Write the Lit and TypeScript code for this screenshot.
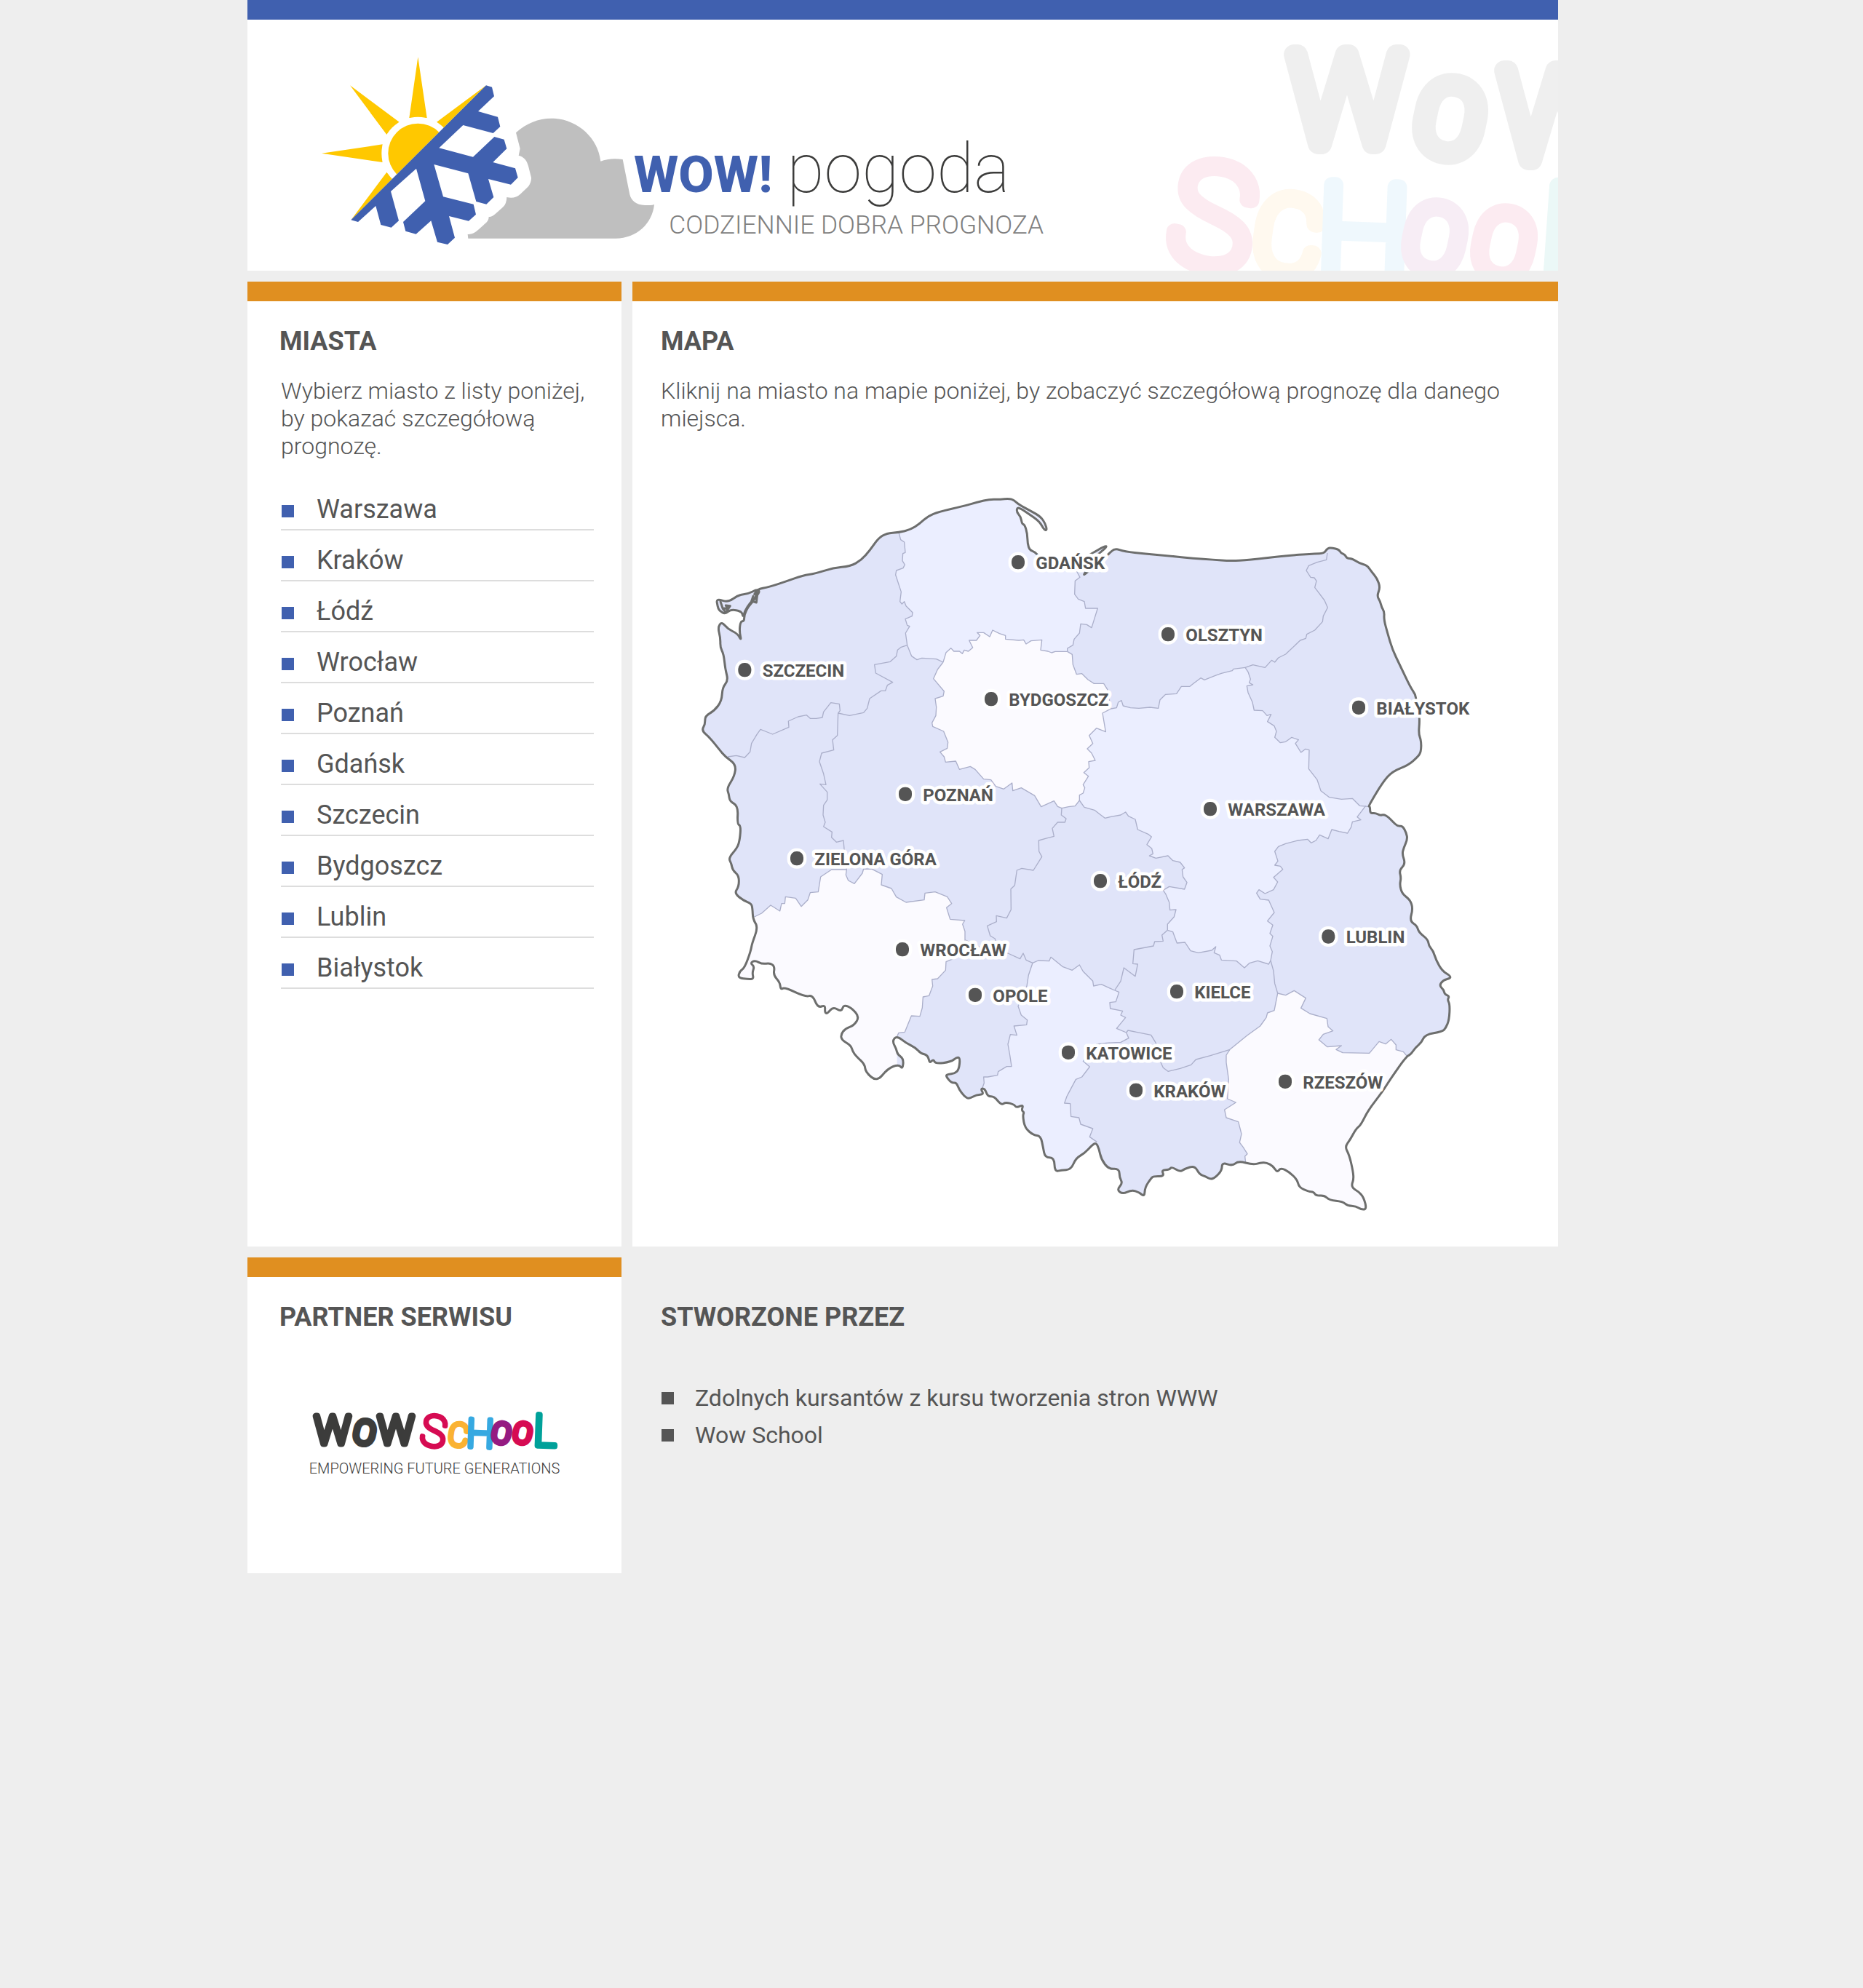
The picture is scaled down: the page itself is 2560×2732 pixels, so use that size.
import { LitElement, html, svg, css } from "lit";
import { customElement } from "lit/decorators.js";

const cities = [
  "Warszawa", "Kraków", "Łódź", "Wrocław", "Poznań",
  "Gdańsk", "Szczecin", "Bydgoszcz", "Lublin", "Białystok",
];

const credits = ["Zdolnych kursantów z kursu tworzenia stron WWW", "Wow School"];

/* ---------- Map geometry (grid of 3300 x 3060 units) ---------- */

type Pt = [number, number];
const pts = (s: string): Pt[] =>
  s.trim().split(/\s+/).map((p) => p.split(",").map(Number) as Pt);
const rev = (p: Pt[]): Pt[] => [...p].reverse();
const poly = (p: Pt[]): string => "M" + p.map((q) => q.join(",")).join("L");

/* Closed curve through the midpoints of the given points. */
const smooth = (p: Pt[]): string => {
  const mid = (a: Pt, b: Pt): Pt => [(a[0] + b[0]) / 2, (a[1] + b[1]) / 2];
  const start = mid(p[p.length - 1], p[0]);
  return (
    "M" + start.join(",") +
    p.map((q, i) => "Q" + q.join(",") + " " + mid(q, p[(i + 1) % p.length]).join(",")).join("") + "Z"
  );
};

const outline = pts(`
300,450 350,440 420,417 490,392 540,385 615,361 685,355 730,330 765,290 800,240 835,218 885,215
935,203 970,180 1005,148 1050,130 1150,107 1210,90 1260,78 1300,79 1340,75 1360,82 1380,100
1430,127 1470,150 1490,180 1496,207 1484,204 1465,170 1420,138 1375,108 1370,130 1388,150
1393,180 1404,183 1415,220 1416,262 1425,288 1445,295 1470,320 1600,345 1680,303 1735,270 1744,274
1700,310 1645,392 1655,385 1750,305 1775,280 1815,294 1900,303 2000,312 2100,322
2180,327 2250,333 2330,329 2470,312 2600,302 2638,302 2652,280 2670,278 2700,286 2708,300
2725,307 2732,322 2755,323 2785,343 2815,350 2835,378 2857,405 2870,442 2856,477 2870,500
2876,525 2887,542 2885,575 2900,630 2920,698 2950,760 2995,855 3015,883 3018,910 3030,970
3032,995 3028,1045 3039,1075 3038,1120 3025,1140 2985,1175 2920,1200 2880,1245 2820,1345 2828,1345
2828,1374 2850,1371 2868,1382 2885,1378 2903,1388 2922,1408 2942,1427 2962,1425 2978,1455
2982,1480 2967,1515 2960,1541 2974,1581 2948,1608 2956,1639 2950,1668 2960,1705 2992,1728
3005,1765 2991,1817 3022,1837 3028,1863 3067,1894 3070,1920 3088,1940 3100,1978 3125,2023
3160,2044 3157,2054 3130,2060 3113,2083 3132,2101 3135,2119 3155,2127 3147,2142 3157,2161
3154,2224 3140,2259 3125,2273 3055,2285 3040,2318 3015,2339 2995,2368 2977,2376 2910,2471
2880,2520 2820,2597 2790,2658 2770,2674 2745,2720 2724,2748 2742,2781 2758,2850 2760,2884
2752,2904 2758,2921 2780,2932 2802,2957 2814,3005 2792,3007 2770,2993 2735,2991 2715,2974
2660,2968 2640,2948 2605,2950 2595,2933 2575,2933 2535,2915 2528,2884 2495,2852 2460,2834
2445,2854 2430,2829 2400,2812 2375,2814 2345,2822 2285,2806 2260,2827 2218,2812 2217,2845
2190,2875 2170,2882 2150,2870 2125,2862 2105,2826 2065,2838 2045,2852 2010,2830 2000,2843
1968,2843 1980,2870 1935,2869 1925,2878 1900,2915 1898,2954 1875,2935 1845,2926 1808,2943
1784,2925 1808,2898 1795,2875 1794,2838 1750,2840 1720,2800 1710,2755 1698,2730 1680,2743
1650,2775 1615,2795 1595,2842 1555,2844 1528,2851 1526,2792 1488,2792 1480,2750 1470,2703
1440,2700 1405,2670 1396,2620 1402,2605 1391,2598 1399,2574 1370,2587 1360,2573 1325,2564
1308,2576 1278,2540 1252,2541 1240,2508 1222,2508 1236,2532 1205,2533 1175,2551 1155,2540
1133,2510 1123,2483 1102,2485 1078,2455 1088,2449 1115,2446 1133,2430 1138,2382 1125,2378
1100,2398 1036,2406 1028,2386 1012,2404 1005,2370 975,2363 955,2340 915,2320 877,2290
858,2312 875,2345 880,2367 905,2385 901,2428 885,2408 840,2425 795,2480 748,2440
745,2408 710,2375 695,2355 688,2330 650,2308 646,2285 665,2260 700,2248 723,2212 690,2175
658,2162 648,2192 615,2170 590,2200 580,2194 582,2163 551,2175 530,2122 500,2130 415,2090
398,2100 395,2070 368,2040 374,2005 355,1990 322,1995 292,1979 273,1990 290,2005 281,2030
287,2056 265,2057 223,2052 228,2025 250,2010 275,1940 280,1910 305,1843 284,1810 282,1765
277,1745 245,1733 207,1702 226,1675 226,1630 200,1608 195,1580 183,1557 220,1515 230,1480
234,1425 219,1417 223,1343 188,1323 185,1295 176,1270 208,1220 214,1172 170,1140
145,1110 105,1060 72,1032 87,1005 86,972 125,950 155,910 158,855 182,825 170,780 163,715
149,690 150,650 139,607 155,583 180,613 220,632 237,662 228,625 232,583 248,580 248,555
265,520 285,500 300,470`);

const island = pts(`
133,487 180,504 225,472 265,468 300,450 312,457 300,478 272,505 250,540 243,566 238,540
192,532 170,552 145,538 138,520`);
const inlets = [
  "M150,500L160,530L172,545L190,518L172,516L180,530L165,528",
  "M285,478L278,498L298,504L302,470L292,488M300,455L290,470",
];

const B = {
  a: pts(`885,215 893,245 908,255 912,298 902,302 900,332 910,348 903,362 875,372 872,390 895,460
    890,500 898,510 908,500 915,518 942,545 940,560 912,572 920,598 930,602 913,630 920,680`),
  b1: pts(`920,680 938,725 960,740 980,733 1040,737 1068,750`),
  b2: pts(`1068,750 1080,710 1100,692 1112,705 1135,705 1147,715 1155,700 1172,705 1190,690 1175,660
    1205,660 1220,640 1208,628 1235,628 1260,645 1272,618 1300,632 1325,640 1325,655 1380,660
    1400,658 1410,675 1430,662 1475,658 1470,700 1500,705 1515,711 1530,706 1580,706`),
  c: pts(`1600,345 1620,378 1632,400 1612,415 1610,470 1625,490 1650,500 1655,528 1705,528 1695,560
    1680,608 1660,595 1635,592 1630,630 1608,655 1603,680 1580,693 1580,706`),
  d: pts(`1580,706 1600,718 1603,760 1618,800 1640,797 1665,822 1690,838 1730,838 1745,862 1760,942`),
  e: pts(`1760,942 1783,938 1790,915 1803,908 1810,930 1840,938 1875,940 1920,936 1955,940 1962,905
    1985,883 2030,880 2050,850 2085,850 2100,838 2130,815 2145,823 2190,805 2215,796 2260,785
    2265,778 2313,772`),
  f: pts(`2313,772 2345,761 2395,772 2422,742 2435,750 2450,732 2480,717 2540,660 2563,652 2567,635
    2600,618 2632,583 2635,560 2653,525 2640,495 2600,442 2607,415 2598,402 2583,400 2565,372
    2575,352 2610,338 2648,328 2652,300`),
  g: pts(`2313,772 2325,790 2335,820 2330,835 2345,843 2320,848 2325,875 2343,915 2350,948 2385,950
    2403,970 2420,965 2405,995 2433,1013 2442,1035 2435,1060 2458,1082 2480,1078 2505,1060
    2533,1070 2520,1085 2543,1122 2562,1108 2577,1112 2575,1190 2610,1235 2625,1280 2660,1307
    2710,1315 2755,1312 2785,1342 2820,1345`),
  h: pts(`2810,1342 2775,1388 2790,1400 2755,1408 2750,1430 2735,1455 2700,1448 2670,1440 2655,1478
    2620,1462 2605,1485 2585,1495 2570,1480 2530,1485 2480,1498 2450,1510 2435,1530 2448,1570
    2435,1587 2458,1591 2468,1604 2430,1637 2447,1656 2430,1688 2395,1704 2370,1688 2360,1702
    2375,1727 2410,1731 2433,1782 2405,1817 2427,1834 2415,1868 2427,1880 2415,1920 2425,1943
    2418,1980`),
  i: pts(`2418,1980 2410,1995 2365,1981 2330,1991 2310,2010 2278,1982 2215,1978 2208,1958 2185,1948
    2192,1923 2175,1938 2120,1948 2088,1940 2065,1905 2032,1908 2015,1862 1993,1855`),
  j: pts(`1993,1855 1993,1830 2020,1800 2028,1770 2003,1772 2000,1740 1985,1705 1975,1690 2000,1675
    2063,1686 2073,1658 2057,1635 2053,1605 2063,1598 2045,1575 2015,1568 1995,1548 1945,1558
    1918,1548 1933,1540 1928,1518 1908,1502 1927,1470 1915,1460 1870,1440 1860,1398 1832,1385
    1820,1368 1800,1380 1760,1387 1735,1393 1715,1378 1692,1360 1650,1348 1630,1320`),
  k: pts(`1630,1320 1630,1298 1645,1290 1652,1268 1645,1255 1667,1220 1648,1205 1670,1185 1668,1160
    1695,1155 1680,1125 1662,1107 1685,1085 1670,1052 1700,1022 1738,1037 1725,960 1760,942`),
  l: pts(`1630,1320 1612,1343 1585,1346 1557,1352 1540,1345 1525,1322 1472,1346 1445,1300 1390,1268
    1355,1280 1352,1248 1318,1273 1285,1262 1265,1235 1235,1232 1200,1192 1180,1180 1135,1192
    1120,1158 1078,1162 1072,1140 1055,1120 1085,1105 1088,1080 1070,1035 1025,1015 1022,1000
    1038,970 1040,935 1035,900 1068,890 1072,870 1028,818 1045,780 1068,750`),
  m: pts(`920,680 895,688 880,700 875,725 850,748 785,760 790,795 860,833 838,845 830,868 812,868
    765,900 755,940 740,958 682,970 635,960`),
  n: pts(`635,960 643,950 640,922 605,917 575,955 570,978 545,982 520,982 505,968 470,975 430,993
    432,1018 365,1047 335,1035 315,1027 300,1048 278,1085 272,1120 250,1143 215,1135 180,1140`),
  o: pts(`635,960 632,1052 612,1070 617,1112 567,1125 558,1160 575,1210 585,1255 560,1252 590,1285
    590,1318 575,1340 573,1380 582,1410 575,1428 610,1450 608,1472 628,1492 657,1485 660,1520
    670,1605`),
  p: pts(`290,1800 320,1785 357,1752 395,1776 402,1745 415,1745 418,1717 460,1723 483,1757 510,1730
    520,1700 553,1697 563,1635 608,1605 670,1605 667,1627 677,1650 702,1663 735,1620 740,1602
    775,1603 817,1625 813,1668 855,1683 875,1718 915,1740 990,1730 993,1702 1035,1697 1085,1717
    1103,1745 1082,1762 1097,1810 1157,1815 1148,1830 1158,1860 1158,1895`),
  q: pts(`1158,1895 1140,1960 1080,1985 1078,2020 1045,2055 1022,2058 1025,2085 1010,2125 985,2130
    982,2175 972,2210 937,2208 910,2275 885,2278 878,2292`),
  r: pts(`1557,1352 1555,1380 1575,1395 1570,1410 1540,1410 1518,1435 1525,1468 1498,1475 1462,1485
    1463,1530 1475,1552 1440,1608 1392,1600 1372,1608 1363,1670 1347,1685 1348,1770 1330,1805
    1287,1795 1288,1820 1250,1837 1262,1878 1282,1890 1290,1935 1335,1950`),
  s1: pts(`1158,1895 1230,1930 1335,1950 1385,1973 1398,1950 1410,1978 1437,1990`),
  s2: pts(`1437,1990 1460,1980 1505,1982 1512,1966 1560,2005 1600,2020 1630,1998 1645,2025 1685,2065
    1688,2085 1720,2078 1775,2103`),
  t: pts(`1775,2103 1800,2065 1813,2010 1860,2045 1870,1995 1850,1993 1855,1935 1935,1920 1940,1902
    1975,1900 1970,1875 1993,1855`),
  u: pts(`1775,2103 1793,2110 1780,2150 1755,2153 1757,2178 1808,2188 1800,2205 1820,2215 1783,2260
    1823,2277`),
  v: pts(`1823,2277 1833,2300 1800,2317 1740,2320 1700,2325 1645,2395 1672,2418 1640,2460 1615,2470
    1578,2540 1568,2568 1592,2570 1595,2623 1628,2628 1635,2655 1685,2673 1672,2707 1702,2728`),
  w: pts(`1823,2277 1830,2268 1865,2275 1925,2287 1945,2320 1965,2400 1975,2422 1995,2437 2045,2425
    2090,2410 2110,2388 2170,2372 2250,2347`),
  x: pts(`2250,2347 2320,2290 2375,2250 2400,2215 2405,2196 2433,2186 2447,2115`),
  y: pts(`2418,1980 2430,2023 2435,2075 2447,2115`),
  z: pts(`2447,2115 2480,2123 2515,2104 2563,2135 2543,2176 2580,2199 2650,2219 2655,2253 2675,2270
    2635,2284 2617,2307 2652,2336 2710,2331 2688,2347 2715,2360 2825,2362 2865,2314 2892,2324
    2915,2305 2935,2328 2935,2348 2965,2356 2980,2374`),
  aa: pts(`2250,2347 2235,2370 2235,2400 2245,2470 2240,2550 2275,2565 2228,2595 2235,2628 2285,2645
    2298,2695 2290,2730 2305,2750 2322,2777 2312,2787 2315,2815`),
  bb: pts(`1437,1990 1420,2040 1413,2085 1377,2168 1390,2205 1415,2225 1412,2245 1360,2250 1372,2288
    1345,2285 1335,2325 1343,2370 1350,2417 1330,2417 1295,2438 1292,2453 1252,2460 1235,2460
    1237,2485 1228,2510`),
};

const regions: { tone: string; d: string }[] = [
  { tone: "pale", d: poly([...B.a, ...B.b1, ...B.b2, ...rev(B.c), ...pts("1600,0 885,0")]) },
  { tone: "pale", d: poly([...B.e, ...B.g, ...B.h, ...B.i, ...B.j, ...B.k]) },
  { tone: "pale", d: poly([...B.s2, ...B.u, ...B.v, ...pts("1702,3060 1228,3060"), ...rev(B.bb)]) },
  { tone: "light", d: poly([...B.b2, ...B.d, ...rev(B.k), ...B.l]) },
  { tone: "light", d: poly([...B.p, ...B.q, ...pts("878,3060 0,3060 0,1800")]) },
  { tone: "light", d: poly([...B.z, ...pts("3300,2374 3300,3060 2315,3060"), ...rev(B.aa), ...B.x]) },
];

const pins: [string, number, number][] = [
  ["Gdańsk", 1377, 338], ["Olsztyn", 1995, 635], ["Szczecin", 250, 782],
  ["Bydgoszcz", 1266, 902], ["Białystok", 2781, 937], ["Poznań", 912, 1294],
  ["Warszawa", 2169, 1355], ["Zielona Góra", 465, 1559], ["Łódź", 1716, 1652],
  ["Lublin", 2656, 1881], ["Wrocław", 900, 1934], ["Kielce", 2031, 2108],
  ["Opole", 1200, 2122], ["Katowice", 1584, 2359], ["Rzeszów", 2478, 2479],
  ["Kraków", 1863, 2515],
];

const slug = (name: string) => "#" + name.toLowerCase().replace(/\s+/g, "-");

/* ---------- Brand lettering: thin letters thickened by a round stroke ---------- */

interface Glyph { ch: string; x: number; y: number; size: number; pen: number; tilt: number; ink: string }
const g = (ch: string, x: number, y: number, size: number, pen: number, tilt: number, ink: string): Glyph =>
  ({ ch, x, y, size, pen, tilt, ink });

const partnerMark: Glyph[] = [
  g("W", 37, 54, 54, 9, 0, "coal"), g("O", 81, 54, 44, 9, 12, "coal"), g("W", 124, 54, 54, 9, 0, "coal"),
  g("S", 176, 58, 60, 6, 10, "crimson"), g("C", 210, 57, 43, 7, 8, "amber"),
  g("H", 240, 59, 54, 7, 2, "sky"), g("O", 269, 53, 38, 8, 12, "plum"),
  g("O", 298, 53, 38, 8, 12, "crimson"), g("L", 329, 57, 60, 8, 2, "teal"),
];

const headerMark: Glyph[] = [
  g("W", 251, 158, 172, 28, 0, "coal"), g("O", 392, 171, 134, 29, 12, "coal"), g("W", 540, 180, 172, 28, 0, "coal"),
  g("S", 66, 326, 195, 22, 10, "crimson"), g("C", 170, 335, 145, 22, 8, "amber"),
  g("H", 274, 345, 182, 22, 2, "sky"), g("O", 371, 332, 124, 23, 12, "plum"),
  g("O", 466, 340, 124, 23, 12, "crimson"), g("L", 568, 360, 200, 24, 4, "teal"),
];

const lettering = (glyphs: Glyph[]) => glyphs.map((l) => svg`
  <text class="glyph ${l.ink}" x=${l.x} y=${l.y} font-size=${l.size} stroke-width=${l.pen}
    transform="rotate(${l.tilt} ${l.x} ${l.y - l.size / 3})">${l.ch}</text>`);

const brandStyles = css`
  .glyph {
    font-family: Roboto, "Liberation Sans", sans-serif;
    font-weight: 100;
    text-anchor: middle;
    stroke-linejoin: round;
    stroke-linecap: round;
  }
  .coal { fill: #3c3c3b; stroke: #3c3c3b; }
  .crimson { fill: #d60b52; stroke: #d60b52; }
  .amber { fill: #fab233; stroke: #fab233; }
  .sky { fill: #36a9e1; stroke: #36a9e1; }
  .plum { fill: #951b81; stroke: #951b81; }
  .teal { fill: #00a19a; stroke: #00a19a; }
`;

@customElement("weather-header")
export class WeatherHeader extends LitElement {
  static styles = [brandStyles, css`
    :host { display: block; }
    .bar {
      display: flex;
      justify-content: space-between;
      align-items: flex-start;
      border-top: 27px solid #4060af;
      background: #fff;
      padding: 13px 0 0 90px;
      overflow: hidden;
    }
    .logo { display: block; flex: 0 1 1000px; min-width: 0; height: auto; margin-top: 20px; overflow: visible; }
    .mark { display: block; flex: 0 1 541px; min-width: 0; height: auto; }
    .faint { opacity: 0.08; }
    .sun { fill: #ffc800; }
    .gap { fill: #fff; }
    .flake { fill: #4060af; }
    .cloud { fill: #bfbfbf; }
    .name { font: 800 211px Roboto, sans-serif; fill: #4060af; }
    .word { font: 100 281px Roboto, sans-serif; fill: #3c3c3b; }
    .claim { font: 300 106px Roboto, sans-serif; fill: #808080; }
  `];

  render() {
    return html`
      <header class="bar">
        <svg class="logo" viewBox="0 0 3000 900" role="img" aria-label="WOW! pogoda">
          <defs><clipPath id="half"><path d="M714,172L157,727H0V0H714Z" /></clipPath></defs>
          <g clip-path="url(#half)">
            <path class="sun" d="M433,55L470,306H397ZM36,452L287,415V489ZM153,172L356,323L304,375ZM714,172L510,323L562,375ZM157,727L304,530L356,582Z" />
            <circle class="gap" cx="433" cy="452" r="150" />
            <circle class="sun" cx="433" cy="452" r="123" />
          </g>
          <path class="flake" d="M714,172L738,179L747,217L681,279L762,302L772,342L743,369L619,336L520,430L660,467L748,384L788,395L799,433L742,489L834,514L845,552L816,581L723,558L745,633L715,662L673,651L640,535L499,498L537,631L662,662L672,704L642,731L561,711L585,800L555,828L513,818L487,730L425,785L382,773L372,735L463,649L426,515L321,609L354,730L323,758L280,747L259,669L186,735L157,727Z" />
          <path class="cloud" d="M837,367C880,328 930,308 982,308C1085,308 1175,385 1186,485C1210,476 1240,471 1277,477L1306,622C1311,645 1332,666 1368,666H1390Q1400,666 1407,663C1400,740 1335,803 1248,803H640L638,786C665,785 672,776 715,737Q725,728 725,714C740,714 746,708 785,672Q798,660 799,633C822,638 840,634 855,620L885,592C897,580 901,560 900,552L888,505C882,480 868,466 848,461L854,433Z" />
          <text class="name" x="1323" y="612">WOW!</text>
          <text class="word" x="1954" y="612">pogoda</text>
          <text class="claim" x="1468" y="783">CODZIENNIE DOBRA PROGNOZA</text>
        </svg>
        <svg class="mark" viewBox="0 0 541 332" aria-hidden="true">
          <g class="faint">${lettering(headerMark)}</g>
        </svg>
      </header>`;
  }
}

@customElement("poland-map")
export class PolandMap extends LitElement {
  static styles = css`
    :host { display: block; }
    .map { display: block; width: 100%; height: auto; overflow: visible; }
    .base { fill: #e0e4f9; }
    .pale { fill: #ebeeff; }
    .light { fill: #fbfaff; }
    .border { fill: none; stroke: #abafca; stroke-width: 4; stroke-linejoin: round; }
    .coast { fill: none; stroke: #6d6e6d; stroke-width: 9; stroke-linejoin: round; stroke-linecap: round; }
    .dot { fill: #555; stroke: #fff; stroke-width: 26; paint-order: stroke; }
    .label {
      font: 700 72px Roboto, "Liberation Sans", sans-serif;
      fill: #555;
      stroke: #fff;
      stroke-width: 27;
      stroke-linejoin: round;
      paint-order: stroke;
    }
  `;

  render() {
    const land = smooth(outline);
    return html`
      <svg class="map" viewBox="0 0 3300 3060" role="group" aria-label="Mapa Polski">
        <defs><clipPath id="land"><path d=${land} /></clipPath></defs>
        <path class="base" d=${land} />
        <path class="base" d=${smooth(island)} />
        <g clip-path="url(#land)">
          ${regions.map((r) => svg`<path class=${r.tone} d=${r.d} />`)}
          ${Object.values(B).map((b) => svg`<path class="border" d=${poly(b)} />`)}
        </g>
        <path class="coast" d=${land} />
        <path class="coast" d=${smooth(island)} />
        ${inlets.map((d) => svg`<path class="coast" d=${d} />`)}
        ${pins.map(([name, x, y]) => svg`
          <a href=${slug(name)}>
            <rect class="dot" x=${x - 27} y=${y - 29} width="54" height="58" rx="25" />
            <text class="label" x=${x + 73} y=${y + 28}>${name.toUpperCase()}</text>
          </a>`)}
      </svg>`;
  }
}

@customElement("app-root")
export class AppRoot extends LitElement {
  static styles = [brandStyles, css`
    :host {
      display: block;
      min-height: 100vh;
      background: #eee;
      color: #555;
      font-family: Roboto, "Liberation Sans", sans-serif;
    }
    .page {
      box-sizing: border-box;
      max-width: 1880px;
      margin: 0 auto;
      padding-right: 79px;
    }
    .grid {
      display: grid;
      grid-template-columns: minmax(0, 514fr) minmax(0, 1272fr);
      gap: 15px;
      margin-top: 15px;
    }
    .card { border-top: 27px solid #e08f20; background: #fff; padding-top: 34px; }
    .side { padding-left: 44px; padding-right: 38px; }
    .main { padding-left: 39px; padding-right: 39px; }
    .open { border-top-color: transparent; background: none; }
    .title { margin: 0; font-size: 36px; line-height: 42px; font-weight: 700; }
    .lead { margin: 28px 0 0; font-size: 32px; line-height: 38px; font-weight: 300; }
    .cities, .credits { list-style: none; margin: 0; padding: 0; }
    .cities { margin-top: 27px; }
    .side .lead, .cities { margin-left: 2px; }
    .city { border-bottom: 2px solid #ddd; padding: 20px 0 6px; }
    .link {
      display: flex;
      align-items: center;
      gap: 31px;
      padding-left: 1px;
      color: inherit;
      font-size: 36px;
      line-height: 42px;
      text-decoration: none;
    }
    .link::before, .credit::before {
      content: "";
      flex: none;
      width: 17px;
      height: 17px;
      margin-top: 4px;
      background: #4060af;
    }
    .credits { margin-top: 65px; }
    .credit {
      display: flex;
      align-items: center;
      gap: 29px;
      padding-left: 1px;
      font-size: 32px;
      line-height: 51px;
    }
    .credit::before { margin-top: 0; background: #555; }
    .map-box { padding: 66px 62px 33px 32px; }
    .partner { display: block; margin-top: 99px; padding: 0 39px 127px 33px; }
    .partner-logo { display: block; width: 100%; max-width: 354px; margin: 0 auto; }
    .motto { font: 300 20px Roboto, sans-serif; fill: #3c3c3b; text-anchor: middle; }
  `];

  render() {
    return html`
      <div class="page">
        <weather-header></weather-header>
        <main class="grid">
          <section class="card side">
            <h2 class="title">MIASTA</h2>
            <p class="lead">Wybierz miasto z listy poniżej, by pokazać szczegółową prognozę.</p>
            <ul class="cities">
              ${cities.map((c) => html`<li class="city"><a class="link" href=${slug(c)}>${c}</a></li>`)}
            </ul>
          </section>
          <section class="card main">
            <h2 class="title">MAPA</h2>
            <p class="lead">Kliknij na miasto na mapie poniżej, by zobaczyć szczegółową prognozę dla danego miejsca.</p>
            <div class="map-box"><poland-map></poland-map></div>
          </section>
          <section class="card side">
            <h2 class="title">PARTNER SERWISU</h2>
            <a class="partner" href="#wow-school">
              <svg class="partner-logo" viewBox="0 0 354 105" role="img" aria-label="Wow School">
                ${lettering(partnerMark)}
                <text class="motto" x="177" y="95">EMPOWERING FUTURE GENERATIONS</text>
              </svg>
            </a>
          </section>
          <section class="card main open">
            <h2 class="title">STWORZONE PRZEZ</h2>
            <ul class="credits">
              ${credits.map((c) => html`<li class="credit">${c}</li>`)}
            </ul>
          </section>
        </main>
      </div>`;
  }
}
